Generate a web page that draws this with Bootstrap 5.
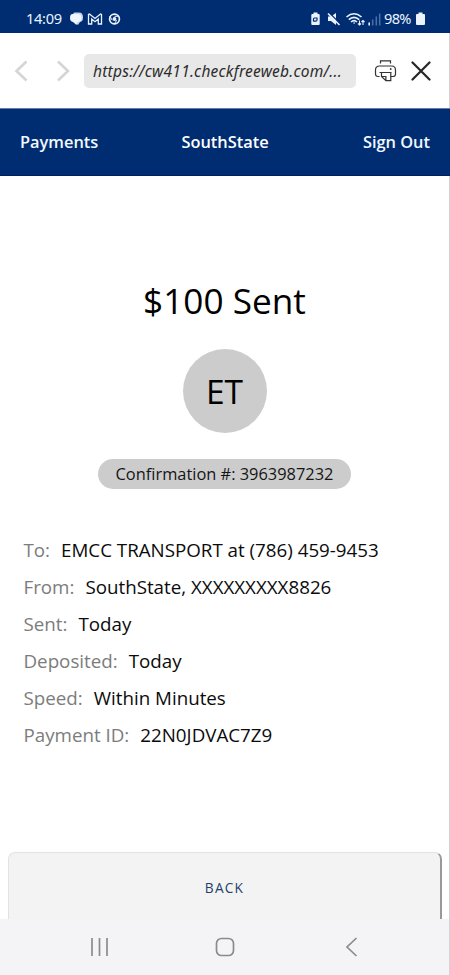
<!DOCTYPE html>
<html lang="en">
<head>
<meta charset="utf-8">
<meta name="viewport" content="width=device-width, initial-scale=1">
<title>Payment sent</title>
<link href="https://cdn.jsdelivr.net/npm/bootstrap@5.3.0/dist/css/bootstrap.min.css" rel="stylesheet">
<style>
body{font-family:"Open Sans","Noto Sans",sans-serif;color:#0b0b0b;width:450px;height:975px;overflow:hidden;background:#fff}
.screen{height:975px;border-right:1px solid #d4d4d6}
svg{display:block;flex:none}
.status{height:33px;margin-right:-1px;background:#002d72;color:#eaf3ff;padding:5px 24px 0 26px;font-family:"Noto Sans",sans-serif}
.clock{width:41px;font-size:14.6px;letter-spacing:-.3px}
.pct{font-size:14.6px;letter-spacing:-.7px;width:31px}
.browser{height:75px;padding:0 18px 0 14px}
.address{width:272px;height:34px;margin-left:14px;border-radius:5px;background:#e8e8e8;color:#2c2c2c;padding-left:9px;font:italic 15.5px/35px "Noto Sans",sans-serif;letter-spacing:.24px;white-space:nowrap}
.bank{height:68px;margin-right:-1px;background:#002d72;border-top:1px solid #6480ab;border-bottom:1px solid #00205e;padding:0 20px;font-size:16.4px;font-weight:600}
.bank a{color:#f2f8ff;text-decoration:none}
.amount{font-size:35.2px;line-height:48px;margin-top:100px;color:#000}
.initials{width:84px;height:84px;background:#ccc;font-size:33.5px;margin-top:25px;padding-top:1px;color:#000}
.confirm{width:253px;height:30px;background:#ccc;font-size:16.4px;margin-top:26px;color:#151515}
.details{margin-top:42px;padding-left:23.5px;font-size:18.75px;line-height:37px}
.details dt{font-weight:400;color:#7c7c7c;margin-right:11px}
.details dd{margin:0}
.back{width:434px;height:67px;margin:99px 0 0 8px;background:#f3f3f3;border:1px solid #e2e2e2;border-right:2px solid #999;border-bottom:0;border-radius:7px 7px 0 0;color:#1e426b;font-size:13.7px;letter-spacing:1.2px;padding:4px 0 0}
.sysnav{height:56px;background:#f4f4f7}
</style>
<script src="https://cdn.jsdelivr.net/npm/bootstrap@5.3.0/dist/js/bootstrap.bundle.min.js"></script>
</head>
<body>
<div class="screen d-flex flex-column">
  <div class="status d-flex align-items-center justify-content-between">
    <div class="d-flex align-items-center">
      <span class="clock">14:09</span>
      <svg width="56" height="18" viewBox="0 0 56 18" fill="none">
        <path d="M7 2.500h5q4 0 4 5 0 4-3 4.500l-2 3-3-3q-4-1-4-4z" fill="#c3d6f0"/>
        <path d="M5.500 4h5q4 0 4 4t-4 4l-1 3-3.500-3q-3-.5-3-4 0-4 2.500-4z" fill="#eef6ff"/>
        <path d="M21.500 14V4.500l1-.5 5.500 4.500L33.500 4l1 .5V14h-3.200V9L28 11.700 24.700 9v5z" stroke="#eaf3ff" stroke-width="1.300"/>
        <circle cx="47.500" cy="9" r="4.900" stroke="#eaf3ff" stroke-width="1.700"/>
        <circle cx="47.500" cy="9" r="1.900" fill="#eaf3ff"/>
        <path d="M47.500 6.300h4.500M45.200 10.200 42.800 6M49.700 10.200 47.200 14.200" stroke="#eaf3ff" stroke-width="1"/>
      </svg>
    </div>
    <div class="d-flex align-items-center">
      <svg width="74" height="18" viewBox="0 0 74 18" fill="none" stroke="#eaf3ff">
        <path d="M3.500 2.500h4V4h1.200q1 0 1 1v9q0 1-1 1H2.300q-1 0-1-1V5q0-1 1-1h1.200z" fill="#eaf3ff" stroke="none"/>
        <path d="M3.500 11.500V9q0-1 1-1H7v2q0 1.200-1.200 1.200H3.500" stroke="#002d72" stroke-width="1.200"/>
        <path d="M18 6.500h3L26 3v12l-5-4h-3z" fill="#eaf3ff" stroke="none"/>
        <path d="m19 2.500 11 11" stroke="#002d72" stroke-width="1.300"/>
        <path d="m18 3.500 11.500 11.500" stroke-width="1.600"/>
        <path d="M36.500 7q7.500-6.500 15 0M38.800 9.600q5.200-4.600 10.400 0M41 12q3-2.600 6 0" stroke-width="1.600"/>
        <path d="M43.500 13h1.200" stroke-width="1.600"/>
        <path d="M49.500 10.500v4.500m-1.500-1.500 1.500 1.500 1.500-1.500M53 15v-4.500M51.500 12l1.500-1.500 1.500 1.500" stroke-width="1.100"/>
        <path d="M59.200 12.500v3" stroke-width="1.600"/>
        <path d="M62.700 9.500v6M66.300 6.500v9M69.700 3.500v12" stroke="#4a6fa6" stroke-width="1.500"/>
      </svg>
      <span class="pct">98%</span>
      <svg width="11" height="18" viewBox="0 0 11 18"><path d="M3.500 2.500h4V4H9q1 0 1 1v9q0 1-1 1H2q-1 0-1-1V5q0-1 1-1h1.500z" fill="#eaf3ff"/></svg>
    </div>
  </div>

  <div class="browser d-flex align-items-center">
    <svg width="56" height="24" viewBox="0 0 56 24" fill="none" stroke="#d5d5d5" stroke-width="2.600"><path d="M12.500 2.500 2.500 12l10 9.500M44 2.500 54 12l-10 9.500"/></svg>
    <div class="address">https://cw411.checkfreeweb.com/...</div>
    <svg class="ms-auto" width="58" height="24" viewBox="0 0 58 24" fill="none" stroke="#333" stroke-width="1.200">
      <path d="M7.500 4.500V1.800h10v2.700M6.500 17.500H5q-2.500 0-2.500-2.500v-4q0-4 4-4h12q4 0 4 4v4q0 2.500-2.500 2.500h-2.500"/>
      <path d="M8.500 13.500h9.300v8.200h-4.900L8.500 17.500zM8.500 17.500h4.400v4.200M6.500 13.500h12"/>
      <circle cx="17.700" cy="10" r=".9" fill="#333" stroke="none"/>
      <path d="m39.500 3.500 17 17M56.500 3.500l-17 17" stroke="#262626" stroke-width="2.200" stroke-linecap="round"/>
    </svg>
  </div>

  <nav class="bank row g-0 align-items-center">
    <a class="col" href="#">Payments</a><span class="col text-center text-white">SouthState</span><a class="col text-end" href="#">Sign Out</a>
  </nav>

  <main class="d-flex flex-column">
    <h1 class="amount text-center fw-normal mb-0">$100 Sent</h1>
    <div class="initials rounded-circle d-flex align-items-center justify-content-center mx-auto">ET</div>
    <div class="confirm rounded-pill d-flex align-items-center justify-content-center mx-auto">Confirmation #: 3963987232</div>
    <dl class="details mb-0">
      <div class="d-flex"><dt>To:</dt><dd>EMCC TRANSPORT at (786) 459-9453</dd></div>
      <div class="d-flex"><dt>From:</dt><dd>SouthState, XXXXXXXXX8826</dd></div>
      <div class="d-flex"><dt>Sent:</dt><dd>Today</dd></div>
      <div class="d-flex"><dt>Deposited:</dt><dd>Today</dd></div>
      <div class="d-flex"><dt>Speed:</dt><dd>Within Minutes</dd></div>
      <div class="d-flex"><dt>Payment ID:</dt><dd>22N0JDVAC7Z9</dd></div>
    </dl>
    <button class="back btn" type="button">BACK</button>
  </main>

  <div class="sysnav mt-auto d-flex align-items-center justify-content-center">
    <svg width="270" height="24" viewBox="0 0 270 24" fill="none" stroke="#8b8b8e" stroke-width="1.700">
      <path d="M2 3v18M9.500 3v18M17 3v18"/>
      <rect x="126.500" y="3.500" width="17" height="17" rx="5"/>
      <path d="m266.500 3-9.500 9 9.500 9"/>
    </svg>
  </div>
</div>
</body>
</html>
